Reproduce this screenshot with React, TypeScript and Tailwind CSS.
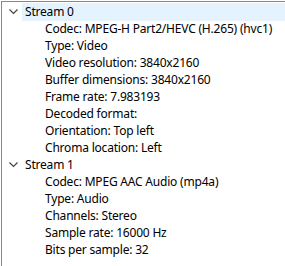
import { Fragment } from "react";

type Stream = {
  name: string;
  selected?: boolean;
  props: string[];
};

const streams: Stream[] = [
  {
    name: "Stream 0",
    selected: true,
    props: [
      "Codec: MPEG-H Part2/HEVC (H.265) (hvc1)",
      "Type: Video",
      "Video resolution: 3840x2160",
      "Buffer dimensions: 3840x2160",
      "Frame rate: 7.983193",
      "Decoded format:",
      "Orientation: Top left",
      "Chroma location: Left",
    ],
  },
  {
    name: "Stream 1",
    props: [
      "Codec: MPEG AAC Audio (mp4a)",
      "Type: Audio",
      "Channels: Stereo",
      "Sample rate: 16000 Hz",
      "Bits per sample: 32",
    ],
  },
];

function Chevron() {
  return (
    <svg width="9" height="6" viewBox="0 0 9 6" className="shrink-0">
      <path d="M0.5 0.5 L4.5 4.5 L8.5 0.5" fill="none" stroke="#404040" strokeWidth="1.1" />
    </svg>
  );
}

export default function App() {
  return (
    <div
      className="w-[285px] h-[266px] bg-white overflow-hidden pt-px pl-px text-[12px] tracking-[-0.2px] text-black"
      style={{ fontFamily: '"Noto Sans", "Open Sans", sans-serif' }}
    >
      <div className="h-full border-l border-t border-[#828790] pt-px">
        {streams.map((s) => (
          <Fragment key={s.name}>
            <div className="flex items-center h-[17px]">
              <div className="w-[20px] flex justify-center pl-[3px]">
                <Chevron />
              </div>
              <div
                className={
                  "flex-1 h-[18px] flex items-center pl-[3px] pt-px " +
                  (s.selected ? "bg-[#e5f3ff]" : "")
                }
              >
                {s.name}
              </div>
            </div>
            {s.props.map((p) => (
              <div key={p} className="h-[17px] flex items-center pt-px pl-[43px] whitespace-nowrap">
                {p}
              </div>
            ))}
          </Fragment>
        ))}
      </div>
    </div>
  );
}
